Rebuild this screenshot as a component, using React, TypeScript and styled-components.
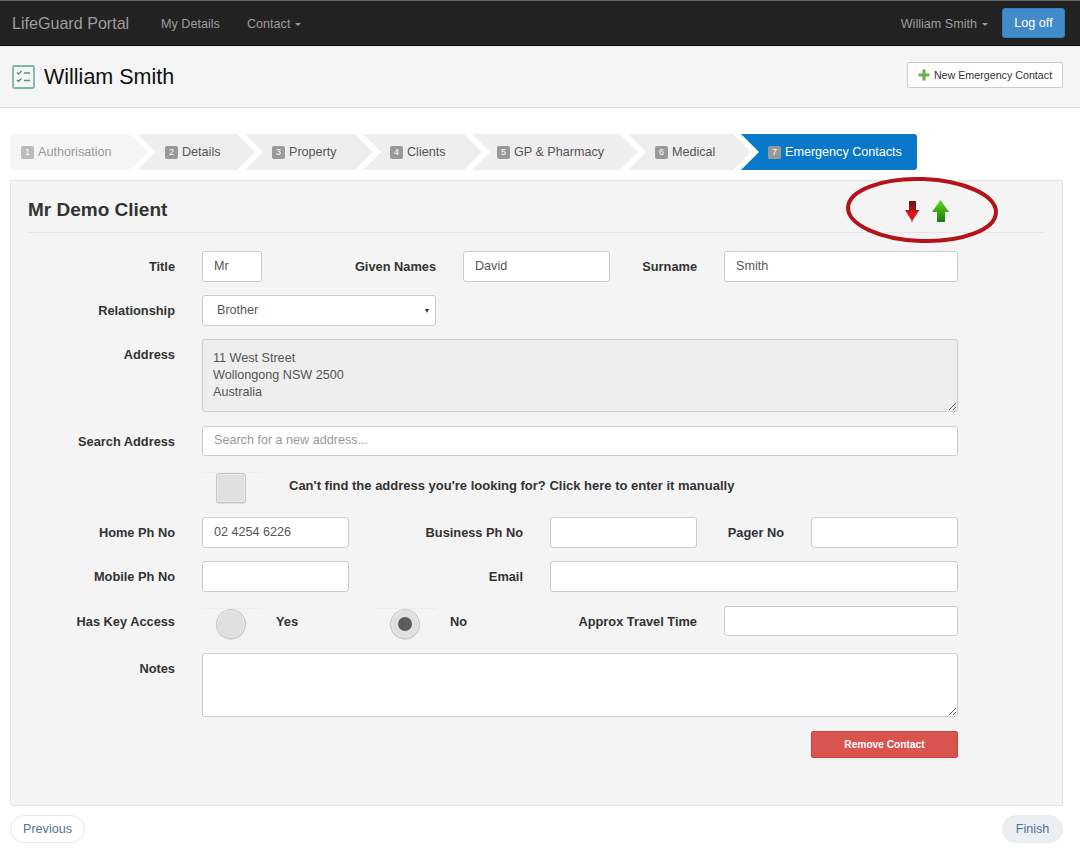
import React from "react";
import styled, { createGlobalStyle } from "styled-components";

const Global = createGlobalStyle`
  html, body { margin: 0; padding: 0; background: #fff; }
  body { font-family: "Liberation Sans", Arial, sans-serif; font-size: 13px; color: #333; }
  * { box-sizing: border-box; }
`;

const Page = styled.div`
  width: 1080px;
  height: 855px;
  overflow: hidden;
`;

const Nav = styled.nav`
  height: 46px;
  background: #222;
  border-top: 1px solid #666;
  border-bottom: 1px solid #080808;
  display: flex;
  align-items: center;
  padding: 0 15px 0 12px;
`;
const Brand = styled.span`
  font-size: 16.1px;
  color: #9d9d9d;
  width: 149px;
`;
const NavLink = styled.span<{ $w?: number }>`
  font-size: 12.6px;
  color: #9d9d9d;
  margin-top: 1px;
  width: ${(p) => (p.$w ? `${p.$w}px` : "auto")};
`;
const Caret = styled.i`
  display: inline-block;
  width: 0;
  height: 0;
  margin-left: 5px;
  vertical-align: middle;
  border-top: 3.5px solid currentColor;
  border-left: 3.5px solid transparent;
  border-right: 3.5px solid transparent;
`;
const Spacer = styled.div`
  flex: 1;
`;
const LogOff = styled.button`
  width: 63px;
  height: 30px;
  margin-left: 14px;
  border: 1px solid #357ebd;
  border-radius: 3px;
  background: #428bca;
  color: #fff;
  font: 12.6px "Liberation Sans", Arial, sans-serif;
  padding: 0;
`;

const Header = styled.header`
  height: 62px;
  background: #f5f5f5;
  border-bottom: 1px solid #ddd;
  display: flex;
  align-items: center;
  padding: 0 17px 0 12px;
`;
const PageTitle = styled.h1`
  margin: 2px 0 0 9px;
  font-size: 21.5px;
  font-weight: 400;
  color: #111;
  flex: 1;
`;
const NewButton = styled.button`
  width: 156px;
  height: 26px;
  margin-bottom: 4px;
  background: #fff;
  border: 1px solid #ccc;
  border-radius: 2px;
  display: flex;
  align-items: center;
  justify-content: center;
  gap: 4px;
  padding: 0;
  color: #333;
  font: 10.7px "Liberation Sans", Arial, sans-serif;
`;

const Steps = styled.ol`
  list-style: none;
  display: flex;
  margin: 26px 0 0 10px;
  padding: 0;
  height: 36px;
`;
const Step = styled.li<{ $first?: boolean; $active?: boolean; $muted?: boolean; $w: number; $pad: number }>`
  width: ${(p) => p.$w}px;
  margin-right: -10px;
  display: flex;
  align-items: center;
  gap: 4px;
  font-size: 12.6px;
  padding-left: ${(p) => p.$pad}px;
  background: ${(p) => (p.$active ? "#0a78c8" : p.$muted ? "#f5f5f5" : "#eee")};
  color: ${(p) => (p.$active ? "#fff" : p.$muted ? "#999" : "#555")};
  border-radius: ${(p) => (p.$first ? "3px 0 0 3px" : p.$active ? "0 3px 3px 0" : "0")};
  clip-path: ${(p) =>
    p.$first
      ? "polygon(0 0, calc(100% - 18px) 0, 100% 50%, calc(100% - 18px) 100%, 0 100%)"
      : p.$active
      ? "polygon(0 0, 100% 0, 100% 100%, 0 100%, 18px 50%)"
      : "polygon(0 0, calc(100% - 18px) 0, 100% 50%, calc(100% - 18px) 100%, 0 100%, 18px 50%)"};
`;
const StepNo = styled.span<{ $muted?: boolean }>`
  width: 13px;
  height: 13px;
  border-radius: 2px;
  background: ${(p) => (p.$muted ? "#bbb" : "#999")};
  color: #fff;
  font-size: 9px;
  line-height: 13px;
  text-align: center;
`;

const Panel = styled.section`
  margin: 10px 17px 0 10px;
  height: 626px;
  background: #f4f4f4;
  border: 1px solid #e3e3e3;
  border-radius: 2px;
  padding: 0 17px;
`;
const TitleBar = styled.div`
  position: relative;
  height: 52px;
  border-bottom: 1px solid #e6e6e6;
  display: flex;
  align-items: center;
  padding-top: 6px;
`;
const ClientName = styled.h2`
  margin: 0;
  font-size: 19px;
  font-weight: 700;
  color: #333;
`;
const Annotation = styled.svg`
  position: absolute;
  left: 817px;
  top: -6px;
`;

const Form = styled.form`
  display: flex;
  flex-direction: column;
  gap: 13px;
  margin-top: 18px;
`;
const Row = styled.div<{ $extra?: number }>`
  display: flex;
  align-items: flex-start;
  margin-top: ${(p) => p.$extra ?? 0}px;
`;
const Label = styled.label<{ $w: number }>`
  width: ${(p) => p.$w}px;
  height: 30px;
  padding-top: 1px;
  margin-right: 27px;
  flex: none;
  text-align: right;
  font-size: 12.8px;
  font-weight: 700;
  line-height: 29px;
  color: #333;
`;
const Input = styled.input<{ $w: number; $h?: number }>`
  width: ${(p) => p.$w}px;
  height: ${(p) => p.$h ?? 31}px;
  flex: none;
  background: #fff;
  border: 1px solid #ccc;
  border-radius: 3px;
  padding: 0 11px 2px;
  color: #555;
  font: 12.6px "Liberation Sans", Arial, sans-serif;
  &::placeholder { color: #999; opacity: 1; }
`;
const SelectWrap = styled.div`
  position: relative;
  width: 234px;
  height: 31px;
  &::after {
    content: "";
    position: absolute;
    right: 7px;
    top: 14px;
    border-top: 4px solid #333;
    border-left: 2.5px solid transparent;
    border-right: 2.5px solid transparent;
  }
`;
const Select = styled.select`
  appearance: none;
  width: 100%;
  height: 100%;
  background: #fff;
  border: 1px solid #ccc;
  border-radius: 3px;
  padding: 0 14px 2px;
  color: #555;
  font: 12.6px "Liberation Sans", Arial, sans-serif;
`;
const TextArea = styled.textarea<{ $h: number; $disabled?: boolean }>`
  width: 756px;
  height: ${(p) => p.$h}px;
  flex: none;
  display: block;
  background: ${(p) => (p.$disabled ? "#eee" : "#fff")};
  border: 1px solid #ccc;
  border-radius: 3px;
  padding: 10px 10px 8px;
  color: #555;
  font: 12.6px/17px "Liberation Sans", Arial, sans-serif;
  overflow: hidden;
`;
const Choice = styled.div<{ $w?: number }>`
  width: ${(p) => (p.$w ? `${p.$w}px` : "auto")};
  flex: none;
  display: flex;
  align-items: flex-start;
`;
const Slot = styled.div`
  width: 60px;
  margin-top: 2px;
  padding: 0 15px 0 14px;
  border-top: 1px solid #ececec;
  margin-right: 14px;
  height: 31px;
  flex: none;
`;
const Tick = styled.span<{ $round?: boolean }>`
  width: 30px;
  height: 30px;
  display: flex;
  align-items: center;
  justify-content: center;
  background: #e0e0e0;
  border: 1px solid #c6c6c6;
  border-radius: ${(p) => (p.$round ? "50%" : "3px")};
  box-shadow: inset 0 0 0 1px #ebebeb, 0 1px 1px rgba(0,0,0,.1);
`;
const Dot = styled.span`
  width: 14px;
  height: 14px;
  border-radius: 50%;
  background: #5c5c5c;
`;
const ChoiceText = styled.span<{ $left?: number; $size?: number }>`
  font-size: ${(p) => p.$size ?? 12.8}px;
  font-weight: 700;
  padding-top: 1px;
  line-height: 29px;
  margin-left: ${(p) => p.$left ?? 0}px;
  color: #333;
`;
const Actions = styled.div`
  display: flex;
  justify-content: flex-end;
  width: 930px;
  margin-top: 1px;
`;
const Remove = styled.button`
  width: 147px;
  height: 27px;
  background: #d9534f;
  border: 1px solid #d43f3a;
  border-radius: 2px;
  color: #fff;
  font: 700 10.2px "Liberation Sans", Arial, sans-serif;
  padding: 0 0 1px;
`;

const Footer = styled.footer`
  display: flex;
  justify-content: space-between;
  margin: 9px 17px 0 10px;
`;
const Pill = styled.button<{ $fill?: boolean; $w: number }>`
  width: ${(p) => p.$w}px;
  height: 28px;
  border: 1px solid ${(p) => (p.$fill ? "#e7eaee" : "#e6e6e6")};
  border-radius: 14px;
  background: ${(p) => (p.$fill ? "#eceef1" : "#fff")};
  color: #4f7396;
  font: 12.6px "Liberation Sans", Arial, sans-serif;
  padding: 0;
`;

const stepData = [
  { label: "Authorisation", w: 138, pad: 11, first: true, muted: true },
  { label: "Details", w: 117, pad: 27 },
  { label: "Property", w: 128, pad: 27 },
  { label: "Clients", w: 119, pad: 27 },
  { label: "GP & Pharmacy", w: 166, pad: 25 },
  { label: "Medical", w: 123, pad: 27 },
  { label: "Emergency Contacts", w: 176, pad: 27, active: true },
];

const Checklist = () => (
  <svg width="23" height="24" viewBox="0 0 23 24" fill="none" stroke="#7fb5a6" strokeWidth="1.8">
    <rect x="1" y="1" width="21" height="22" rx="1.2" />
    <path d="M5 7.5l1.6 1.6L9.5 6M5 15l1.6 1.6 2.9-3M12 8h6M12 15.5h6" stroke="#5a9384" strokeWidth="1.4" />
  </svg>
);
const Plus = () => (
  <svg width="12" height="12" viewBox="0 0 12 12">
    <path d="M4.4 0.5h3.2v3.9h3.9v3.2H7.6v3.9H4.4V7.6H0.5V4.4h3.9z" fill="#6cb04a" />
  </svg>
);

export default function App() {
  return (
    <Page>
      <Global />
      <Nav>
        <Brand>LifeGuard Portal</Brand>
        <NavLink $w={86}>My Details</NavLink>
        <NavLink>Contact<Caret /></NavLink>
        <Spacer />
        <NavLink>William Smith<Caret /></NavLink>
        <LogOff>Log off</LogOff>
      </Nav>
      <Header>
        <Checklist />
        <PageTitle>William Smith</PageTitle>
        <NewButton><Plus />New Emergency Contact</NewButton>
      </Header>
      <Steps>
        {stepData.map((s, i) => (
          <Step key={s.label} $w={s.w} $pad={s.pad} $first={s.first} $active={s.active} $muted={s.muted}>
            <StepNo $muted={s.muted}>{i + 1}</StepNo>
            {s.label}
          </Step>
        ))}
      </Steps>
      <Panel>
        <TitleBar>
          <ClientName>Mr Demo Client</ClientName>
          <Annotation width="156" height="70" viewBox="0 0 156 70">
            <defs>
              <linearGradient id="red" x1="0" y1="0" x2="0" y2="1">
                <stop offset="0" stopColor="#6e1414" />
                <stop offset="0.45" stopColor="#a81a1a" />
                <stop offset="0.55" stopColor="#e3121c" />
                <stop offset="1" stopColor="#d8141c" />
              </linearGradient>
              <linearGradient id="green" x1="0" y1="0" x2="0" y2="1">
                <stop offset="0" stopColor="#62d81c" />
                <stop offset="1" stopColor="#1c7a12" />
              </linearGradient>
            </defs>
            <ellipse cx="77" cy="35" rx="74" ry="31" fill="none" stroke="#b3131b" strokeWidth="4" transform="rotate(2 77 35)" />
            <path d="M64 26h7v9h3.5L67.5 45.5v1.5h-1v-1.5L60 35h4z" fill="url(#red)" />
            <path d="M95.5 25l8.5 12h-4v10h-8V37h-5z" fill="url(#green)" />
          </Annotation>
        </TitleBar>
        <Form onSubmit={(e) => e.preventDefault()}>
          <Row>
            <Label $w={147}>Title</Label>
            <Input $w={60} defaultValue="Mr" />
            <Label $w={174}>Given Names</Label>
            <Input $w={147} defaultValue="David" />
            <Label $w={87}>Surname</Label>
            <Input $w={234} defaultValue="Smith" />
          </Row>
          <Row>
            <Label $w={147}>Relationship</Label>
            <SelectWrap>
              <Select defaultValue="Brother">
                <option>Brother</option>
              </Select>
            </SelectWrap>
          </Row>
          <Row>
            <Label $w={147}>Address</Label>
            <TextArea
              $h={73}
              $disabled
              readOnly
              defaultValue={"11 West Street\nWollongong NSW 2500\nAustralia"}
            />
          </Row>
          <Row $extra={1}>
            <Label $w={147}>Search Address</Label>
            <Input $w={756} $h={30} placeholder="Search for a new address..." />
          </Row>
          <Row $extra={1}>
            <Label $w={147} />
            <Choice>
              <Slot><Tick /></Slot>
              <ChoiceText $left={13} $size={13}>Can't find the address you're looking for? Click here to enter it manually</ChoiceText>
            </Choice>
          </Row>
          <Row $extra={1}>
            <Label $w={147}>Home Ph No</Label>
            <Input $w={147} defaultValue="02 4254 6226" />
            <Label $w={174}>Business Ph No</Label>
            <Input $w={147} />
            <Label $w={87}>Pager No</Label>
            <Input $w={147} />
          </Row>
          <Row>
            <Label $w={147}>Mobile Ph No</Label>
            <Input $w={147} />
            <Label $w={174}>Email</Label>
            <Input $w={408} />
          </Row>
          <Row $extra={1}>
            <Label $w={147}>Has Key Access</Label>
            <Choice $w={174}>
              <Slot><Tick $round /></Slot>
              <ChoiceText>Yes</ChoiceText>
            </Choice>
            <Choice $w={174}>
              <Slot><Tick $round><Dot /></Tick></Slot>
              <ChoiceText>No</ChoiceText>
            </Choice>
            <Label $w={147}>Approx Travel Time</Label>
            <Input $w={234} $h={30} />
          </Row>
          <Row $extra={1}>
            <Label $w={147}>Notes</Label>
            <TextArea $h={64} />
          </Row>
          <Actions>
            <Remove type="button">Remove Contact</Remove>
          </Actions>
        </Form>
      </Panel>
      <Footer>
        <Pill type="button" $w={75}>Previous</Pill>
        <Pill type="button" $w={61} $fill>Finish</Pill>
      </Footer>
    </Page>
  );
}
